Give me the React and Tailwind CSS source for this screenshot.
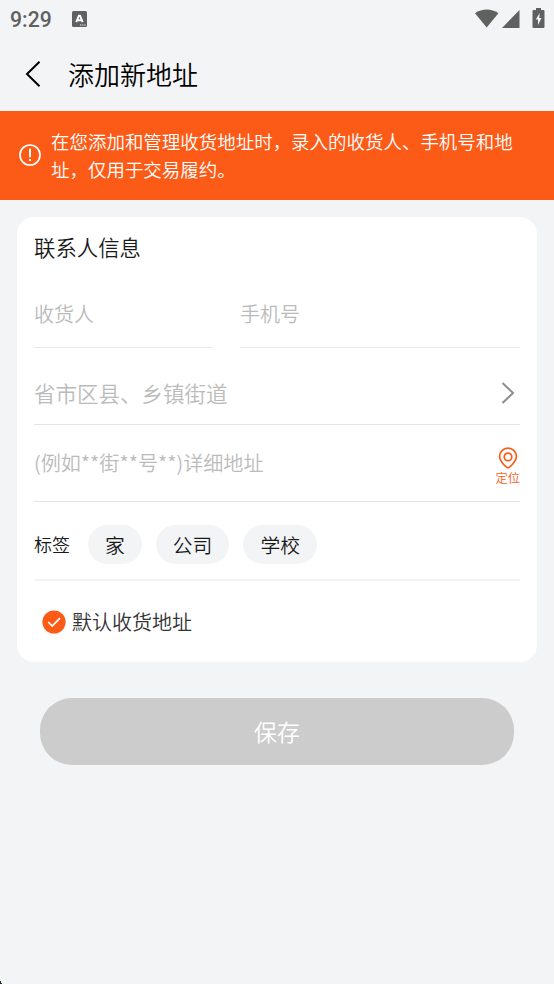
import { useState } from "react";

const tags = ["家", "公司", "学校"];

function StatusBar() {
  return (
    <div className="h-[37px] flex items-center pl-[10px] pr-[9px] text-[#5f6160]">
      <span className="w-[62px] text-[21.2px] leading-[37px] pt-[1px] font-medium font-['Roboto']">9:29</span>
      <svg width="15" height="16" viewBox="0 0 15 16">
        <rect width="15" height="16" rx="1.5" fill="currentColor" />
        <path d="M4.2 11.2 6.9 4.6H8L10.7 11.2M5.6 9.2H9.3" fill="none" stroke="#fff" strokeWidth="1.9" />
        <path d="M8 14h1.2M10.2 14h1.2M12.4 14h1.2" stroke="#fff" strokeWidth="1" />
      </svg>
      <div className="ml-auto flex items-center">
        <svg width="24" height="19" viewBox="0 0 24 19" fill="currentColor">
          <path d="M0 4.2C7 -0.8 16.5 -0.8 23.4 4.2L11.7 18.5Z" />
        </svg>
        <svg className="ml-[3px]" width="18" height="18" viewBox="0 0 18 18" fill="currentColor">
          <path d="M17.5 0V18H0Z" />
        </svg>
        <svg className="ml-[12px] -mt-[2px]" width="13" height="20" viewBox="0 0 13 20">
          <path d="M4 0H9V2H11.5Q12.5 2 12.5 3V19Q12.5 20 11.5 20H1.5Q.5 20 .5 19V3Q.5 2 1.5 2H4Z" fill="currentColor" />
          <path d="M7.7 5 3.8 11.4H6V17L9.5 10H7.2Z" fill="#f3f4f6" />
        </svg>
      </div>
    </div>
  );
}

function App() {
  const [tag, setTag] = useState("");
  const [isDefault, setIsDefault] = useState(true);

  return (
    <div className="relative w-full h-screen overflow-hidden flex flex-col bg-[#f3f4f6] font-[350] font-['Noto_Sans_CJK_SC',sans-serif]">
      <StatusBar />
      <header className="h-[74px] flex items-center pl-[25px]">
        <button>
          <svg width="16" height="26" viewBox="0 0 16 26" fill="none" stroke="#000" strokeWidth="2">
            <path d="M14.5 0.8 2 13 14.5 25.2" />
          </svg>
        </button>
        <h1 className="ml-[27px] text-[26px] leading-[38px] font-[350] text-black">添加新地址</h1>
      </header>

      <div className="h-[89px] flex items-center bg-[#fc5b17] text-white pl-[19px] pb-[1px]">
        <svg className="shrink-0" width="22" height="22" viewBox="0 0 22 22" fill="none" stroke="currentColor">
          <circle cx="11" cy="11" r="10" strokeWidth="1.7" />
          <path d="M11 4.8v8.4M11 15v2" strokeWidth="2" />
        </svg>
        <p className="ml-[10px] w-[470px] text-[18.48px] leading-[28px]">
          在您添加和管理收货地址时，录入的收货人、手机号和地
          <br />
          址，仅用于交易履约。
        </p>
      </div>

      <section className="mx-[17px] mt-[17px] h-[445px] px-[17px] rounded-[17px] bg-white">
        <h2 className="h-[61px] text-[21.4px] leading-[59px] font-[350] text-[#1a1a1a]">联系人信息</h2>
        <div className="flex gap-[28px] text-[20px] leading-[71px] text-[#bbbbbb]">
          <div className="w-[178px] h-[70px] border-b border-[#e8e8e8]">收货人</div>
          <div className="flex-1 h-[70px] border-b border-[#e8e8e8]">手机号</div>
        </div>
        <div className="h-[77px] flex items-center justify-between border-b border-[#e3e4e5]">
          <span className="pt-[13px] text-[21.5px] leading-[32px] text-[#bbbbbb]">省市区县、乡镇街道</span>
          <svg className="mt-[13px] mr-[5px]" width="14" height="22" viewBox="0 0 14 22" fill="none" stroke="#8b8e91" strokeWidth="2">
            <path d="M1.5 1 12 11 1.5 21" />
          </svg>
        </div>
        <div className="h-[77px] flex justify-between border-b border-[#e3e4e5]">
          <span className="text-[20.1px] leading-[75px] text-[#bbbbbb]">(例如**街**号**)详细地址</span>
          <button className="flex flex-col items-center pt-[22px] text-[#fc5b17]">
            <svg width="20" height="22" viewBox="0 0 20 22" fill="none" stroke="currentColor" strokeWidth="1.7">
              <path d="M10 20.8C8.5 20.8 1.6 14.5 1.6 9.6A8.4 8.4 0 0 1 18.4 9.6C18.4 14.5 11.5 20.8 10 20.8Z" />
              <circle cx="10" cy="9.9" r="3.8" />
            </svg>
            <span className="text-[12.3px] leading-[18px]">定位</span>
          </button>
        </div>
        <div className="h-[79px] flex items-center pt-[8px] border-b-2 border-[#f3f4f5] text-[#1a1a1a]">
          <span className="w-[54px] text-[18px]">标签</span>
          {tags.map((item) => (
            <button
              key={item}
              onClick={() => setTag(item)}
              className={`h-[39px] mr-[14px] px-[17px] rounded-full text-[19.8px] leading-[39px] ${
                tag === item ? "bg-orange-100" : "bg-[#f3f4f6]"
              }`}
            >
              {item}
            </button>
          ))}
        </div>
        <button className="h-[82px] flex items-center pl-[8px]" onClick={() => setIsDefault(!isDefault)}>
          <svg width="24" height="24" viewBox="0 0 24 24">
            <circle cx="12" cy="12" r="11.6" fill={isDefault ? "#fc5b17" : "#cccccc"} />
            <path d="M6.2 12 10.2 16 18 8.2" fill="none" stroke="#fff" strokeWidth="1.7" />
          </svg>
          <span className="ml-[6px] text-[20px] text-[#333333]">默认收货地址</span>
        </button>
      </section>

      <button className="mx-[40px] mt-[36px] h-[67px] shrink-0 rounded-[32px] bg-[#cccccc] text-white text-[23px]">
        保存
      </button>
      <svg className="absolute left-0 bottom-0" width="2" height="3" viewBox="0 0 2 3">
        <path d="M0 0h1v2h1v1H0Z" fill="#1f2d1f" />
      </svg>
    </div>
  );
}

export default App;
